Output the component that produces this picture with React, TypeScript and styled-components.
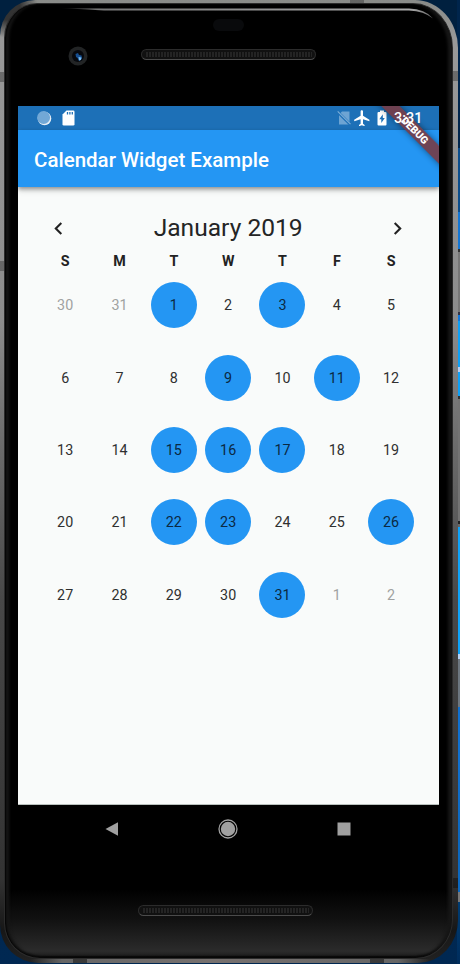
import React from "react";
import styled, { createGlobalStyle } from "styled-components";

const GlobalStyle = createGlobalStyle`
  *, *::before, *::after { box-sizing: border-box; }
  body { margin: 0; background: #002449; font-family: Roboto, sans-serif; overflow: hidden; }
`;

const Desktop = styled.main`
  width: 460px;
  height: 964px;
  background:
    linear-gradient(180deg,
      #00254c 0 148px, #0b4d8c 148px 212px, #1476d4 212px 249px,
      #333 249px 252px, #777 252px 312px, #334 312px 315px,
      #1178dd 315px 321px, #0da0f7 321px 367px, #b8cff5 367px 372px,
      #0da0f7 372px 396px, #333 396px 399px, #747474 399px 521px,
      #222 521px 524px, #666 524px 527px, #0da3fa 527px 654px,
      #b8d2f5 654px 659px, #6d7780 659px 707px, #0f70d0 707px 760px,
      #0b67be 840px 892px, #777 892px 902px, #003c72 902px, #002d5c 964px)
      right / 3px 100% no-repeat,
    linear-gradient(180deg, #00203f 0 60px, #002852);
`;

const Phone = styled.div`
  width: 458px;
  height: 963px;
  padding: 3px 5px 4px 4px;
  border-radius: 35px 43px 40px 38px / 36px 48px 43px 38px;
  background:
    linear-gradient(#4448, #4448) 0 72px / 5px 10px no-repeat,
    linear-gradient(#4448, #4448) 0 261px / 5px 10px no-repeat,
    linear-gradient(#4448, #4448) 100% 71px / 6px 10px no-repeat,
    linear-gradient(#1118, #1118) 100% 878px / 6px 10px no-repeat,
    linear-gradient(#4448, #4448) 350px 0 / 14px 4px no-repeat,
    linear-gradient(#1118, #1118) 73px 100% / 14px 5px no-repeat,
    linear-gradient(#1118, #1118) 370px 100% / 14px 5px no-repeat,
    linear-gradient(90deg, #3330, #666 8%, #77716f 45%, #666 92%, #3330) 30px 100% / 400px 4px no-repeat,
    radial-gradient(circle at 8px 8px, #333 0 12px, #3330 30px),
    linear-gradient(180deg, #898b88 0, #999 40px, #8c8c8c 320px, #6a6a6a 450px, #484848 600px, #333 880px, #171717 930px, #222);
`;

const Body = styled.div`
  position: relative;
  display: flex;
  flex-direction: column;
  width: 449px;
  height: 956px;
  padding: 0 14px;
  border: 1px solid #2b2b2b;
  border-radius: 33px 40px 37px 36px / 35px 45px 40px 36px;
  background: linear-gradient(180deg, #000 0 885px, #111 915px, #2b2b2b 947px, #161616 956px);
  box-shadow: inset 1px 0 2px #000, inset 5px 0 3px -1px #171717, inset -5px 0 3px -1px #171717,
    inset 0 -2px 2px #080808;
`;

/* Reflection along the upper rim of the glass. */
const Rim = styled.svg`
  position: absolute;
  left: -1px;
  top: 0;
  width: 449px;
  height: 24px;
  pointer-events: none;
`;

const TopBezel = styled.header`
  position: relative;
  flex: none;
  height: 102px;
`;

const Sensor = styled.span`
  position: absolute;
  left: 194px;
  top: 15px;
  width: 31px;
  height: 12px;
  border-radius: 6px;
  background: #090a0c;
`;

const Camera = styled.svg`
  position: absolute;
  left: 49.4px;
  top: 42.3px;
  width: 20px;
  height: 20px;
`;

const Speaker = styled.span<{ $left: number; $top: number }>`
  position: absolute;
  left: ${(p) => p.$left}px;
  top: ${(p) => p.$top}px;
  width: 175px;
  height: 11px;
  border: 1px solid #2c2c2c;
  border-bottom-color: #4b4b4b;
  border-radius: 6px;
  background: repeating-linear-gradient(90deg, #101010 0 1px, #242424 1px 3px) 3px 2px / 167px 5px no-repeat, #111;
`;

const Screen = styled.section`
  position: relative;
  display: flex;
  flex-direction: column;
  flex: none;
  width: 421px;
  margin-left: -1px;
  height: 699px;
  overflow: hidden;
  background: #f9fbfa;
  border-bottom: 1px solid #b9c1bd;
`;

const StatusBar = styled.div`
  display: flex;
  align-items: center;
  flex: none;
  height: 24px;
  padding: 0 17px 0 18px;
  background: #1d70b7;
  color: #fff;
`;

const StatusGroup = styled.div<{ $gap: number; $end?: boolean }>`
  display: flex;
  align-items: center;
  gap: ${(p) => p.$gap}px;
  margin-left: ${(p) => (p.$end ? "auto" : "0")};
`;

const Clock = styled.time`
  position: relative;
  z-index: 2;
  width: 28px;
  margin-left: 1px;
  padding-top: 2px;
  font-size: 14.4px;
  font-weight: 500;
  line-height: 24px;
  white-space: nowrap;
`;

const AppBar = styled.h1`
  position: relative;
  flex: none;
  height: 57px;
  margin: 0;
  padding-left: 16px;
  background: #2496f3;
  color: #fff;
  font-size: 20.5px;
  font-weight: 500;
  line-height: 60px;
  box-shadow: 0 2px 4px rgba(0, 0, 0, 0.34), 0 4px 6px rgba(0, 0, 0, 0.12);
`;

const Ribbon = styled.div`
  position: absolute;
  z-index: 1;
  left: 346.5px;
  top: 18px;
  width: 100px;
  height: 12.5px;
  background: rgba(116, 61, 73, 0.93);
  color: #fff;
  font-size: 10.4px;
  font-weight: 900;
  line-height: 13px;
  text-align: center;
  transform: rotate(45deg);
  box-shadow: 0 0 6px rgba(0, 0, 0, 0.45);
`;

const Calendar = styled.div`
  display: flex;
  flex-direction: column;
  padding: 20px 20.7px 0 20px;
`;

const MonthBar = styled.div`
  display: flex;
  align-items: center;
  justify-content: space-between;
  height: 42px;
  padding: 0 8px;
`;

const MonthTitle = styled.h2`
  margin: 0;
  color: #242525;
  font-size: 24.6px;
  font-weight: 400;
  line-height: 42px;
`;

const ArrowButton = styled.button`
  display: flex;
  padding: 0;
  border: 0;
  background: none;
  color: #222;
`;

const Grid = styled.div`
  display: grid;
  grid-template-columns: repeat(7, 1fr);
`;

const Weekday = styled.span`
  height: 20.2px;
  color: #222;
  font-size: 14.3px;
  font-weight: 700;
  line-height: 24px;
  text-align: center;
`;

const DayCell = styled.div`
  display: flex;
  align-items: center;
  justify-content: center;
  height: 72.3px;
`;

const Day = styled.span<{ $marked: boolean; $outside: boolean }>`
  width: 46px;
  height: 46px;
  border-radius: 50%;
  background: ${(p) => (p.$marked ? "#2496f3" : "transparent")};
  color: ${(p) => (p.$outside ? "#a0a2a1" : p.$marked ? "#0b2942" : "#2f3030")};
  font-size: 14.3px;
  line-height: 46.6px;
  text-align: center;
`;

const NavBar = styled.nav`
  display: flex;
  align-items: center;
  justify-content: space-between;
  flex: none;
  height: 48px;
  padding: 0 84px 0 83px;
`;

const days = [30, 31, ...Array.from({ length: 31 }, (_, i) => i + 1), 1, 2];
const marked = new Set([1, 3, 9, 11, 15, 16, 17, 22, 23, 26, 31]);

function Arrow({ next = false }: { next?: boolean }) {
  return (
    <ArrowButton aria-label={next ? "Next month" : "Previous month"}>
      <svg width="25" height="25" viewBox="0 0 24 24" fill="currentColor">
        <path d={next ? "M10 6 8.59 7.41 13.17 12l-4.58 4.59L10 18l6-6z" : "M15.41 7.41 14 6l-6 6 6 6 1.41-1.41L10.83 12z"} />
      </svg>
    </ArrowButton>
  );
}

export default function App() {
  return (
    <Desktop>
      <GlobalStyle />
      <Phone>
        <Body>
          <Rim viewBox="0 0 449 24" fill="none">
            <defs>
              <linearGradient id="rim" x1="55" x2="445" y1="0" y2="0" gradientUnits="userSpaceOnUse">
                <stop stopColor="#666" stopOpacity="0" />
                <stop offset=".1" stopColor="#777" />
                <stop offset=".9" stopColor="#aaa" />
                <stop offset="1" stopColor="#aaa" stopOpacity=".35" />
              </linearGradient>
            </defs>
            <path d="M56 4.1 100 4.6H405Q421 5 429 14.5Q420 7 405 6.4H100Z" fill="url(#rim)" />
          </Rim>
          <TopBezel>
            <Sensor />
            <Camera viewBox="0 0 20 20">
              <circle cx="10" cy="10" r="9.5" fill="#222425" />
              <circle cx="10" cy="10" r="6" fill="#07090e" />
              <path d="M7.500 8 10 7 11 9 13.500 9.500 14 12.500 11 15 9.500 12 8 11Z" fill="#164f91" />
              <path d="m10.500 11 3 .5-.5 2.500-2 .5Z" fill="#7bbdf0" />
            </Camera>
            <Speaker $left={122} $top={45} />
          </TopBezel>
          <Screen>
            <StatusBar>
              <StatusGroup $gap={10}>
                <svg width="16" height="16" viewBox="0 0 16 16">
                  <circle cx="8.5" cy="8.5" r="6.8" fill="#e6eef5" />
                  <circle cx="7.6" cy="7.5" r="6.5" fill="#72a8d6" />
                </svg>
                <svg width="13" height="16" viewBox="0 0 13 16">
                  <path d="M4.5.5h6.7q1.3 0 1.3 1.3v12.4q0 1.3-1.3 1.3H1.8Q.5 15.500.5 14.200V4.500Z" fill="#fff" />
                  <path d="M5.500 2v2.500M7.900 2v2.500M10.300 2v2.500" stroke="#1d70b7" strokeWidth="1.300" />
                </svg>
              </StatusGroup>
              <StatusGroup $gap={3.5} $end>
                <svg width="14" height="16" viewBox="0 0 14 16">
                  <path d="M5 1.500h7.500v13H2V4.500Z" fill="#6da4d3" />
                  <path d="m.5 1.800 12.800 12.800" stroke="#1d70b7" strokeWidth="2.800" />
                  <path d="m.7 1.400 12.800 12.800" stroke="#7fb0d9" strokeWidth="1.100" />
                </svg>
                <svg width="16" height="16" viewBox="2 2 19.500 20" fill="#fff">
                  <path transform="translate(0 .2)" d="M21 16v-2l-8-5V3.500C13 2.670 12.330 2 11.500 2S10 2.670 10 3.500V9l-8 5v2l8-2.500V19l-2 1.500V22l3.500-1 3.500 1v-1.500L13 19v-5.500z" />
                </svg>
                <svg width="16" height="16" viewBox="0 0 16 16">
                  <path d="M6 .5h4V2h1.400q1.100 0 1.100 1v11.500q0 1-1 1h-7q-1 0-1-1V3q0-1 1.100-1H6Z" fill="#fff" />
                  <path d="M8.800 4.300 5.300 9.200h2v3.700l3.500-5H8.800Z" fill="#1d70b7" />
                </svg>
                <Clock>3:31</Clock>
              </StatusGroup>
            </StatusBar>
            <AppBar>Calendar Widget Example</AppBar>
            <Calendar>
              <MonthBar>
                <Arrow />
                <MonthTitle>January 2019</MonthTitle>
                <Arrow next />
              </MonthBar>
              <Grid>
                {["S", "M", "T", "W", "T", "F", "S"].map((name, i) => (
                  <Weekday key={i}>{name}</Weekday>
                ))}
                {days.map((day, i) => {
                  const outside = i < 2 || i > 32;
                  return (
                    <DayCell key={i}>
                      <Day $outside={outside} $marked={!outside && marked.has(day)}>{day}</Day>
                    </DayCell>
                  );
                })}
              </Grid>
            </Calendar>
            <Ribbon>DEBUG</Ribbon>
          </Screen>
          <NavBar>
            <svg width="20" height="20" viewBox="0 0 20 20"><path d="M3.500 10 16 3.300v13.400Z" fill="#a0a0a0" /></svg>
            <svg width="22" height="22" viewBox="0 0 22 22">
              <circle cx="11" cy="11" r="9" fill="none" stroke="#a0a0a0" strokeWidth="1.300" />
              <circle cx="11" cy="11" r="7.200" fill="#a0a0a0" />
            </svg>
            <svg width="20" height="20" viewBox="0 0 20 20"><rect x="3.500" y="3.500" width="13" height="13" fill="#a0a0a0" /></svg>
          </NavBar>
          <Speaker $left={133} $top={901} />
        </Body>
      </Phone>
    </Desktop>
  );
}
